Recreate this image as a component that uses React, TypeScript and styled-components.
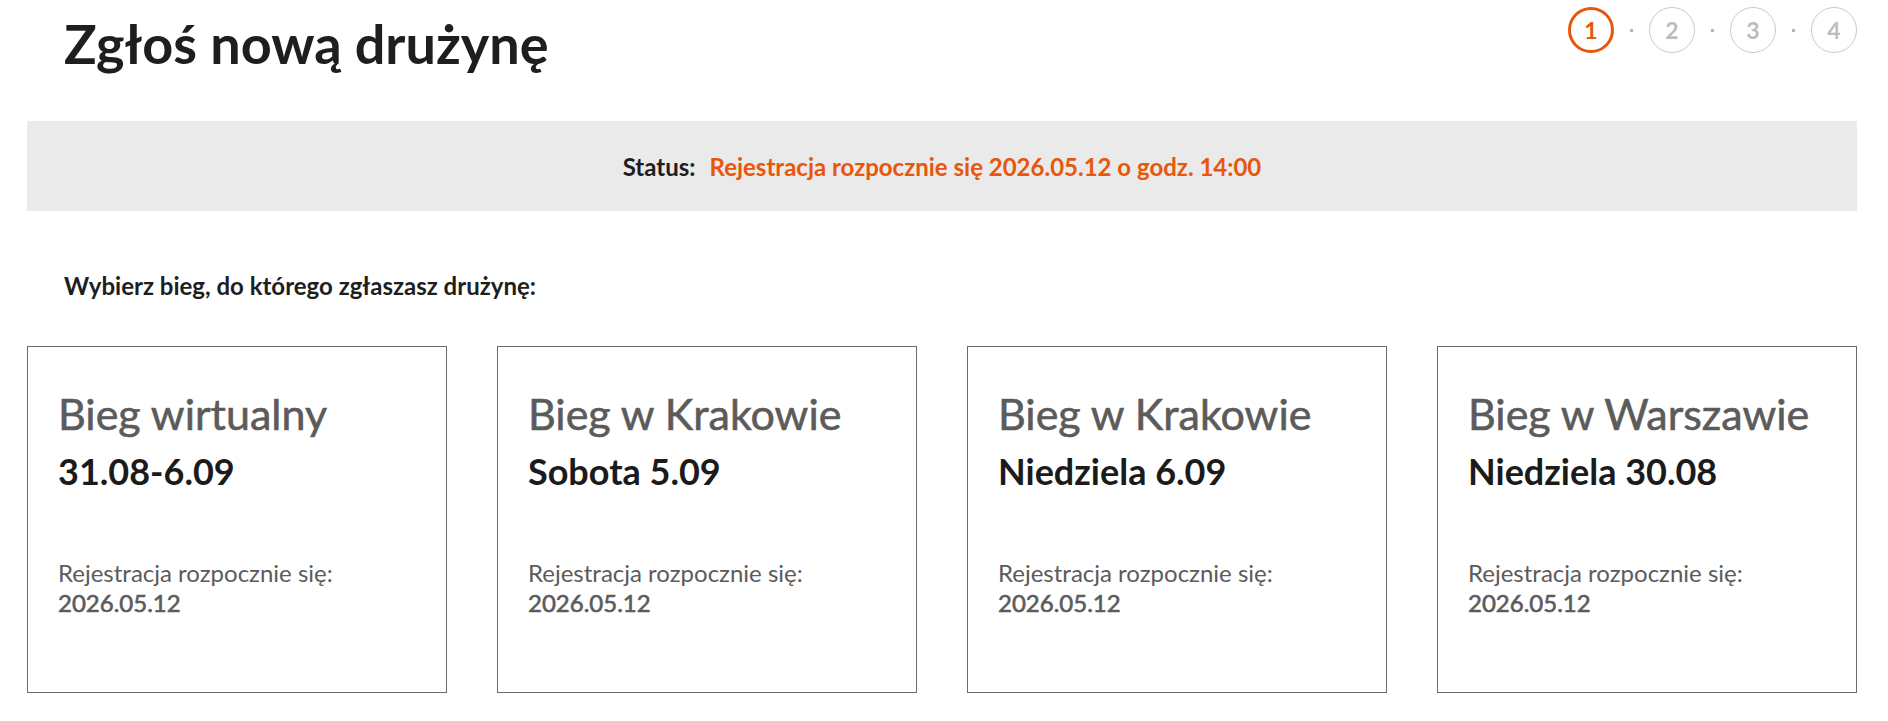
import React from "react";
import styled, { createGlobalStyle } from "styled-components";

const GlobalStyle = createGlobalStyle`
  html, body { margin: 0; padding: 0; background: #ffffff; }
  body { font-family: Lato, "Open Sans", Arial, sans-serif; color: #1e1e1e; }
  * { box-sizing: border-box; }
`;

const Page = styled.div`
  padding: 0 31px 0 27px;
  font-family: Lato, "Open Sans", Arial, sans-serif;
`;

const Header = styled.header`
  display: flex;
  justify-content: space-between;
  align-items: flex-start;
  height: 121px;
`;

const Title = styled.h1`
  margin: 0;
  padding: 8px 0 0 37px;
  font-size: 54px;
  line-height: 72px;
  font-weight: 700;
  color: #1e1e1e;
`;

const Stepper = styled.ol`
  display: flex;
  align-items: center;
  gap: 16px;
  list-style: none;
  margin: 7px 0 0 0;
  padding: 0;
`;

const Step = styled.li<{ $active?: boolean }>`
  width: 46px;
  height: 46px;
  border-radius: 50%;
  display: flex;
  align-items: center;
  justify-content: center;
  border: ${(p) => (p.$active ? "3px solid #e8560c" : "1px solid #c9c9c9")};
  color: ${(p) => (p.$active ? "#e8560c" : "#bdbdbd")};
  font-size: 23px;
  font-weight: 700;
`;

const StepDot = styled.li`
  width: 3px;
  height: 3px;
  background: #b5b5b5;
`;

const StatusBar = styled.div`
  height: 90px;
  background: #eaeaea;
  display: flex;
  align-items: center;
  justify-content: center;
  gap: 14px;
  font-size: 24px;
  font-weight: 700;
`;

const StatusLabel = styled.span`
  color: #1e1e1e;
`;

const StatusValue = styled.span`
  color: #e8560c;
`;

const Lead = styled.p`
  margin: 0;
  padding: 60px 0 0 37px;
  height: 135px;
  font-size: 24px;
  line-height: 29px;
  font-weight: 700;
  color: #1e1e1e;
`;

const Cards = styled.div`
  display: grid;
  grid-template-columns: repeat(4, 420px);
  justify-content: space-between;
`;

const Card = styled.div`
  height: 347px;
  border: 1px solid #6b6b6b;
  padding: 42px 30px 0 30px;
  background: #fff;
`;

const RaceName = styled.h2`
  margin: 0;
  font-size: 43px;
  line-height: 50px;
  font-weight: 400;
  color: #5b5b5b;
  -webkit-text-stroke: 0.6px #5b5b5b;
`;

const RaceDate = styled.div`
  margin-top: 11px;
  font-size: 36px;
  line-height: 42px;
  font-weight: 700;
  color: #1b1b1b;
`;

const RegInfo = styled.div`
  margin-top: 66px;
  font-size: 24px;
  line-height: 30px;
  color: #5b5b5b;
`;

const RegDate = styled.div`
  -webkit-text-stroke: 0.6px #5b5b5b;
`;

const races = [
  { name: "Bieg wirtualny", date: "31.08-6.09" },
  { name: "Bieg w Krakowie", date: "Sobota 5.09" },
  { name: "Bieg w Krakowie", date: "Niedziela 6.09" },
  { name: "Bieg w Warszawie", date: "Niedziela 30.08" },
];

export default function App() {
  return (
    <Page>
      <GlobalStyle />
      <Header>
        <Title>Zgłoś nową drużynę</Title>
        <Stepper>
          <Step $active>1</Step>
          <StepDot />
          <Step>2</Step>
          <StepDot />
          <Step>3</Step>
          <StepDot />
          <Step>4</Step>
        </Stepper>
      </Header>
      <StatusBar>
        <StatusLabel>Status:</StatusLabel>
        <StatusValue>Rejestracja rozpocznie się 2026.05.12 o godz. 14:00</StatusValue>
      </StatusBar>
      <Lead>Wybierz bieg, do którego zgłaszasz drużynę:</Lead>
      <Cards>
        {races.map((r, i) => (
          <Card key={i}>
            <RaceName>{r.name}</RaceName>
            <RaceDate>{r.date}</RaceDate>
            <RegInfo>
              Rejestracja rozpocznie się:
              <RegDate>2026.05.12</RegDate>
            </RegInfo>
          </Card>
        ))}
      </Cards>
    </Page>
  );
}
